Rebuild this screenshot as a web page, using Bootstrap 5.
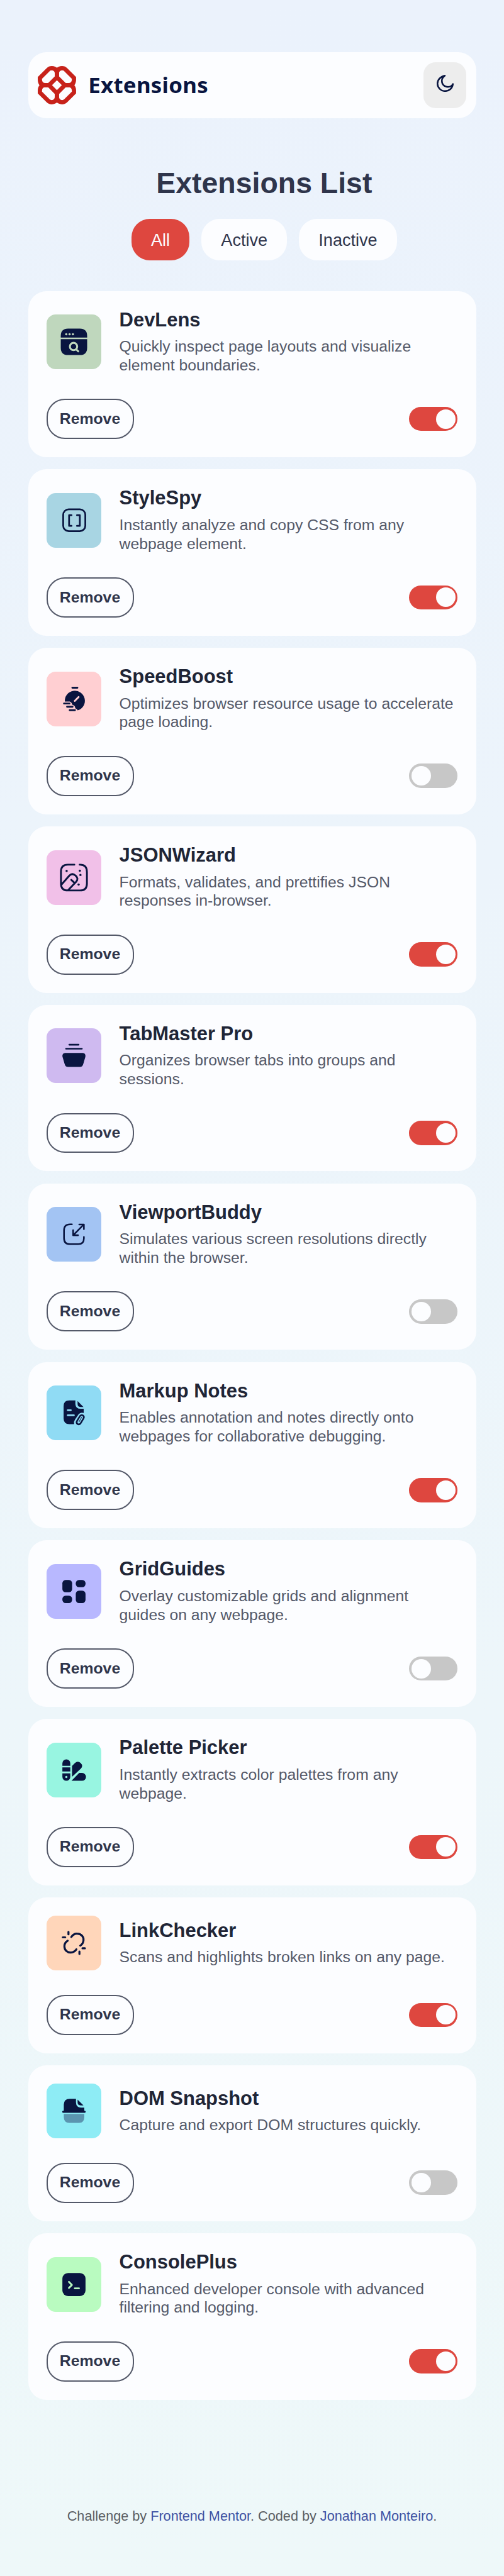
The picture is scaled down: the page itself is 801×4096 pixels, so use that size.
<!DOCTYPE html>
<html lang="en">
<head>
<meta charset="utf-8">
<meta name="viewport" content="width=device-width, initial-scale=1">
<title>Extensions</title>
<link href="https://cdn.jsdelivr.net/npm/bootstrap@5.3.0/dist/css/bootstrap.min.css" rel="stylesheet">
<style>
  html { font-size: 9.674px; }
  body { font-family: "Liberation Sans", Arial, sans-serif; color: #2f354b; min-height: 423.4rem; background: linear-gradient(180deg, #ebf2fc, #eef8f9); }
  .page { width: 73.6rem; padding-top: 8.6rem; }
  .panel { background: #fcfdff; border-radius: 3rem; }
  .topbar { height: 10.8rem; padding: 0 1.6rem; }
  .brand-mark { width: 6.3rem; height: 6.3rem; }
  .brand-name { font: 700 3.6rem/1 "Noto Sans", sans-serif; color: #091540; margin-left: 2rem; letter-spacing: .03rem; }
  .theme-btn { width: 7rem; height: 7.6rem; border: 0; border-radius: 2rem; background: #ededed; padding: 0 0 .6rem; }
  .theme-btn svg { width: 2.8rem; height: 2.8rem; }
  .intro { padding-left: 4rem; margin-top: 7.86rem; }
  .intro h1 { font-size: 4.8rem; font-weight: 700; line-height: 1.2; margin: 0 0 3rem; color: #2f354b; }
  .filters { gap: 2rem; }
  .pill { height: 6.8rem; border: 0; border-radius: 3rem; padding: 0 3.2rem; font-size: 2.8rem; line-height: 1; background: #fcfdff; color: #2f354b; }
  .pill.on { background: #de473f; color: #fcfdff; }
  .ext-list { gap: 2rem; margin-top: 5rem; }
  .ext { padding: 3rem; }
  .ext-head { gap: 3rem; min-height: 9rem; margin-bottom: 4rem; }
  .tile { width: 9rem; height: 9rem; border-radius: 1.5rem; }
  .ext h2 { font-size: 3.2rem; font-weight: 700; line-height: 3.6rem; margin: 0 0 1rem; color: #202536; }
  .ext p { font-size: 2.56rem; line-height: 1.2; margin: 0; color: #545969; }
  .remove { height: 6.6rem; padding: 0 2rem; border: 2px solid #545969; border-radius: 3rem; background: none; font-size: 2.56rem; font-weight: 700; line-height: 1; color: #2f354b; }
  .toggle { width: 8rem; height: 4rem; border-radius: 2rem; padding: .4rem; background: #c7c7c7; }
  .toggle.on { background: #de473f; justify-content: flex-end; }
  .toggle i { width: 3.2rem; height: 3.2rem; border-radius: 50%; background: #fcfdff; }
  .credit { margin-top: 17.86rem; font-size: 2.24rem; line-height: 1.2; color: #5b5e63; }
  .credit a { color: #3e52a3; text-decoration: none; }
</style>
</head>
<body>
<div class="page mx-auto">
  <header class="panel topbar d-flex align-items-center justify-content-between">
    <div class="d-flex align-items-center">
      <svg class="brand-mark" viewBox="0 0 63 63" fill="none" stroke="#c7221a" stroke-width="7">
        <defs><path id="loop" d="M3.5 19.5L17 6Q19.500 3.500 23 3.500Q31.500 4 31.500 12.500V18.500L18.500 31.500H12.500Q4 31.500 3.500 23Z"/></defs>
        <use href="#loop"/>
        <use href="#loop" transform="translate(63) scale(-1 1)"/>
        <use href="#loop" transform="translate(0 63) scale(1 -1)"/>
        <use href="#loop" transform="translate(63 63) scale(-1)"/>
      </svg>
      <span class="brand-name">Extensions</span>
    </div>
    <button class="theme-btn d-flex align-items-center justify-content-center" type="button" aria-label="Toggle theme">
      <svg viewBox="0 0 28 28" fill="none" stroke="#091540" stroke-width="2.6" stroke-linejoin="round"><path d="M13.500 1.300C5.500 3 1.300 8.500 1.300 14.500C1.300 21 7 26.700 13.800 26.700C20.500 26.700 26 22 26.700 15C25 18.500 22 19.800 18.500 19.800C12.500 19.800 8.500 15.500 8.500 9.800C8.500 6 10.500 3.500 13.500 1.300Z"/></svg>
    </button>
  </header>

  <section class="intro d-flex flex-column align-items-center">
    <h1>Extensions List</h1>
    <div class="filters d-flex">
      <button class="pill on" type="button">All</button>
      <button class="pill" type="button">Active</button>
      <button class="pill" type="button">Inactive</button>
    </div>
  </section>

  <main class="ext-list d-flex flex-column" id="list"></main>

  <footer class="credit text-center">Challenge by <a href="#">Frontend Mentor</a>. Coded by <a href="#">Jonathan Monteiro</a>.</footer>
</div>

<script src="https://cdn.jsdelivr.net/npm/bootstrap@5.3.0/dist/js/bootstrap.bundle.min.js"></script>
<script>
  // name, description, tile colour, enabled, icon drawn on a 270-unit tile
  const line = (w, inner) => `<g fill="none" stroke="#091540" stroke-width="${w}" stroke-linecap="round" stroke-linejoin="round">${inner}</g>`;
  const extensions = [
    ["DevLens", "Quickly inspect page layouts and visualize element boundaries.", "#bfd7bd", true,
      `<path d="M70 114V106Q70 70 106 70H164Q200 70 200 106V114ZM70 122H200V164Q200 200 164 200H106Q70 200 70 164Z"/>
       <g fill="#bfd7bd"><circle cx="97" cy="98" r="5.500"/><circle cx="113.500" cy="98" r="5.500"/><circle cx="130" cy="98" r="5.500"/></g>
       <g fill="none" stroke="#bfd7bd" stroke-width="9.500" stroke-linecap="round"><circle cx="133" cy="158" r="18"/><path d="M147 173L156 182"/></g>`],
    ["StyleSpy", "Instantly analyze and copy CSS from any webpage element.", "#a8d5e3", true,
      line(8.5, `<rect x="82" y="80" width="109" height="108" rx="27"/><path d="M123 109H111V162H123M150 109H164V162H150"/>`)],
    ["SpeedBoost", "Optimizes browser resource usage to accelerate page loading.", "#ffcfd2", false,
      `<path d="M90 147A49.500 49.500 0 1 1 153 191Q152 183 144 182Q140 180 140 173Q138 166 130 164L126 162Q124 150 114 147Z"/>
       <path d="M139 144L158 125" stroke="#ffcfd2" stroke-width="9" stroke-linecap="round"/>` +
      line(9, `<path d="M127 79H152M86 157H113M101 173H128M114 190H140"/>`)],
    ["JSONWizard", "Formats, validates, and prettifies JSON responses in-browser.", "#f1c0e8", true,
      line(9, `<path d="M163 71H165Q199 71 199 107V164Q199 198 165 198H105Q71 198 71 164V105Q71 71 105 71H137M73 170L113 124Q127 111 142 124Q160 138 146 155L106 197M122 146L138 161"/>`) +
      `<circle cx="99" cy="102" r="5.500"/><circle cx="164" cy="101" r="5.500"/><circle cx="167" cy="122" r="5.500"/><circle cx="158" cy="169" r="5.500"/>`],
    ["TabMaster Pro", "Organizes browser tabs into groups and sessions.", "#cfbaf0", true,
      line(8, `<path d="M112 81H158M96 101H174"/>`) +
      `<path d="M92 122H178C188 122 194 131 191 142L181 176Q177 191 164 191H106Q93 191 89 176L79 142C76 131 82 122 92 122Z"/>`],
    ["ViewportBuddy", "Simulates various screen resolutions directly within the browser.", "#a3c4f3", false,
      line(8, `<path d="M125 86H116Q86 86 86 116V154Q86 184 116 184H156Q184 184 184 156V148M183 87L132 139M161 87H184V110M131 115V140H155"/>`)],
    ["Markup Notes", "Enables annotation and notes directly onto webpages for collaborative debugging.", "#90dbf4", true,
      `<path d="M112 74H142V92Q144 115 168 115H183V136Q168 130 158 142L140 168Q133 178 136 191H112Q84 191 84 163V102Q84 74 112 74Z"/>
       <path d="M153 77L182 106H167Q153 105 153 92Z"/>
       <path d="M104 122H120M104 147H135" stroke="#90dbf4" stroke-width="8" stroke-linecap="round"/>
       <g transform="rotate(31 166 169)"><rect x="151.500" y="140" width="29" height="58" rx="14"/><rect x="159.500" y="148.500" width="13" height="41" rx="6.500" fill="#90dbf4"/><rect x="164.500" y="154" width="3" height="28" rx="1.500"/></g>`],
    ["GridGuides", "Overlay customizable grids and alignment guides on any webpage.", "#b8b8ff", false,
      `<rect x="78" y="78" width="48" height="61" rx="16"/><rect x="78" y="156" width="48" height="36" rx="16"/><rect x="144" y="78" width="48" height="36" rx="16"/><rect x="144" y="131" width="48" height="61" rx="16"/>`],
    ["Palette Picker", "Instantly extracts color palettes from any webpage.", "#98f5e1", true,
      `<path d="M78 114V101.500A19.500 19.500 0 0 1 117 101.500V114ZM78 122H117V142H78ZM78 151H117V168.500A19.500 19.500 0 0 1 78 168.500Z"/><circle cx="97.500" cy="169" r="5.500" fill="#98f5e1"/>
       <path d="M125.500 168V115L140 100Q154 87 168 100Q182 114 169 128ZM123 188L161 149H175A19.500 19.500 0 0 1 175 188Z"/>`],
    ["LinkChecker", "Scans and highlights broken links on any page.", "#ffd6ba", true,
      line(10, `<path d="M122 105C130 94 141 88 151 89C171 90 184 104 182 122C181 134 175 142 166 148M104 124C93 131 88 141 88 151C88 170 102 183 120 182C131 181 141 175 147 166M108 80V92M80 107H92M162 177V189M177 161H189"/>`)],
    ["DOM Snapshot", "Capture and export DOM structures quickly.", "#8eecf5", false,
      `<path d="M85 134V103Q86 75 114 75H145V93Q146 119 170 119H186V134H188A5 5 0 0 1 188 144H82A5 5 0 0 1 82 134ZM153 79L182 108H168Q153 107 153 94Z"/>
       <path fill="#5b95b0" d="M85 150H186V166Q186 194 160 194H112Q85 194 85 166Z"/>`],
    ["ConsolePlus", "Enhanced developer console with advanced filtering and logging.", "#b9fbc0", true,
      `<rect x="78" y="78" width="114" height="114" rx="28"/><path d="M110 122L125 137L110 152M139 154H160" fill="none" stroke="#b9fbc0" stroke-width="8.500" stroke-linecap="round" stroke-linejoin="round"/>`]
  ];
  document.getElementById("list").innerHTML = extensions.map(([name, text, tint, on, icon]) => `
    <article class="panel ext">
      <div class="ext-head d-flex align-items-center">
        <svg class="tile flex-shrink-0" viewBox="0 0 270 270" fill="#091540" style="background:${tint}">${icon}</svg>
        <div><h2>${name}</h2><p>${text}</p></div>
      </div>
      <div class="d-flex align-items-center justify-content-between">
        <button class="remove" type="button">Remove</button>
        <span class="toggle d-flex ${on ? "on" : ""}" role="switch" aria-checked="${on}"><i></i></span>
      </div>
    </article>`).join("");
</script>
</body>
</html>
